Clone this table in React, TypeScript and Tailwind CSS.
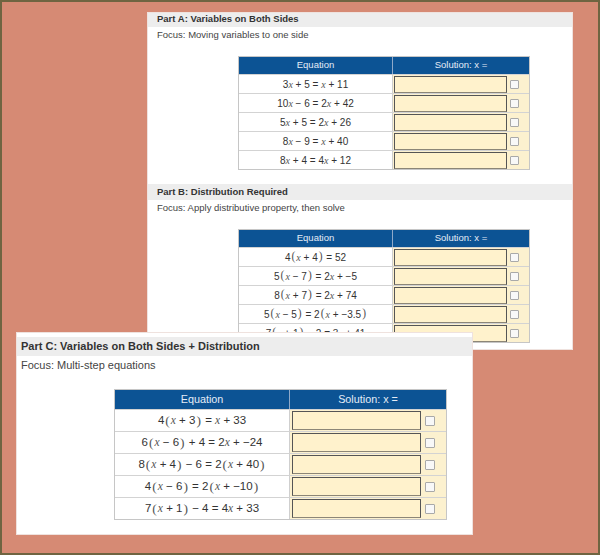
import React from "react";

type Variant = {
  band: string;
  focus: string;
  table: string;
  header: string;
  hCol1: string;
  hCol2: string;
  row: string;
  col1: string;
  col2: string;
  input: string;
  check: string;
  paren: string;
};

const small: Variant = {
  band: "h-[16px] pl-[9px] flex items-center bg-[#ededed] text-[9.5px] font-bold text-[#333]",
  focus: "h-[16px] pl-[9px] flex items-center text-[9.5px] text-[#444]",
  table: "ml-[90px] mt-[13px] w-[292px] border border-[#c6c6c6]",
  header: "h-[17px] flex bg-[#0c5394] text-[9.5px] text-[#e4ecf7]",
  hCol1: "w-[153px] flex items-center justify-center",
  hCol2: "w-[137px] border-l border-[#8fa9c9] flex items-center justify-center",
  row: "h-[19px] flex border-t border-[#d3d3d3]",
  col1: "w-[153px] bg-white flex items-center justify-center text-[10px] text-[#333] whitespace-pre",
  col2: "w-[137px] border-l border-[#cfcfcf] bg-[#fcf1cf] flex items-center pl-[1px]",
  input: "w-[113px] h-[17px] bg-[#fff2cc] border border-[#555] border-b-[#8c8677] outline-none",
  check: "appearance-none ml-[3px] w-[9px] h-[9px] border border-[#a9a9a9] bg-[#f8f8f8] rounded-[1px]",
  paren: "font-['Liberation_Serif',serif] text-[11.5px] leading-none mx-[1px] text-[#555]",
};

const big: Variant = {
  band: "h-[19px] pl-[4px] flex items-center bg-[#ededed] text-[11px] font-bold text-[#333]",
  focus: "h-[19px] pl-[4px] flex items-center text-[11px] text-[#444]",
  table: "ml-[97px] mt-[14px] w-[333px] border border-[#c6c6c6]",
  header: "h-[19px] flex bg-[#0c5394] text-[10.8px] text-[#e4ecf7]",
  hCol1: "w-[174px] flex items-center justify-center",
  hCol2: "w-[157px] border-l border-[#8fa9c9] flex items-center justify-center",
  row: "h-[22px] flex border-t border-[#d3d3d3]",
  col1: "w-[174px] bg-white flex items-center justify-center text-[11.5px] text-[#333] whitespace-pre",
  col2: "w-[157px] border-l border-[#cfcfcf] bg-[#fcf1cf] flex items-center pl-[2px]",
  input: "w-[129px] h-[19px] bg-[#fff2cc] border border-[#555] border-b-[#8c8677] outline-none",
  check: "appearance-none ml-[4px] w-[10px] h-[10px] border border-[#a9a9a9] bg-[#f8f8f8] rounded-[1px]",
  paren: "font-['Liberation_Serif',serif] text-[13.5px] leading-none mx-[1px] text-[#555]",
};

function Eq({ s, v }: { s: string; v: Variant }) {
  return (
    <span className="flex items-center">
      {s.split("").map((c, i) => {
        if (c === "x")
          return (
            <span key={i} className="font-['Liberation_Serif',serif] italic text-[#555]">
              x
            </span>
          );
        if (c === "(" || c === ")")
          return (
            <span key={i} className={v.paren}>
              {c}
            </span>
          );
        return <span key={i}>{c}</span>;
      })}
    </span>
  );
}

function Table({ eqs, v }: { eqs: string[]; v: Variant }) {
  return (
    <div className={v.table}>
      <div className={v.header}>
        <div className={v.hCol1}>Equation</div>
        <div className={v.hCol2}>Solution: x =</div>
      </div>
      {eqs.map((e, i) => (
        <div key={i} className={v.row}>
          <div className={v.col1}>
            <Eq s={e} v={v} />
          </div>
          <div className={v.col2}>
            <input type="text" readOnly className={v.input} />
            <input type="checkbox" className={v.check} />
          </div>
        </div>
      ))}
    </div>
  );
}

function Section({
  title,
  focus,
  eqs,
  v,
  first,
}: {
  title: string;
  focus: string;
  eqs: string[];
  v: Variant;
  first?: boolean;
}) {
  return (
    <div className={first ? "-mt-[2px]" : "mt-[14px]"}>
      <div className={v.band}>{title}</div>
      <div className={v.focus}>{focus}</div>
      <Table eqs={eqs} v={v} />
    </div>
  );
}

export default function App() {
  return (
    <div className="w-[600px] h-[555px] border-2 border-[#6f6441] bg-[#d68a74] relative overflow-hidden font-['Liberation_Sans',Arial,sans-serif]">
      <div className="ml-[145px] mt-[10px] w-[426px] h-[338px] bg-white border border-[#efe2de] overflow-hidden">
        <Section
          first
          v={small}
          title="Part A: Variables on Both Sides"
          focus="Focus: Moving variables to one side"
          eqs={[
            "3x + 5 = x + 11",
            "10x − 6 = 2x + 42",
            "5x + 5 = 2x + 26",
            "8x − 9 = x + 40",
            "8x + 4 = 4x + 12",
          ]}
        />
        <Section
          v={small}
          title="Part B: Distribution Required"
          focus="Focus: Apply distributive property, then solve"
          eqs={[
            "4(x + 4) = 52",
            "5(x − 7) = 2x + −5",
            "8(x + 7) = 2x + 74",
            "5(x − 5) = 2(x + −3.5)",
            "7(x + 1) − 2 = 3x + 41",
          ]}
        />
      </div>
      <div className="absolute left-[14px] top-[330px] w-[457px] h-[203px] bg-white border border-[#efe2de] pt-[4px]">
        <div className={big.band}>Part C: Variables on Both Sides + Distribution</div>
        <div className={big.focus}>Focus: Multi-step equations</div>
        <Table
          v={big}
          eqs={[
            "4(x + 3) = x + 33",
            "6(x − 6) + 4 = 2x + −24",
            "8(x + 4) − 6 = 2(x + 40)",
            "4(x − 6) = 2(x + −10)",
            "7(x + 1) − 4 = 4x + 33",
          ]}
        />
      </div>
    </div>
  );
}
